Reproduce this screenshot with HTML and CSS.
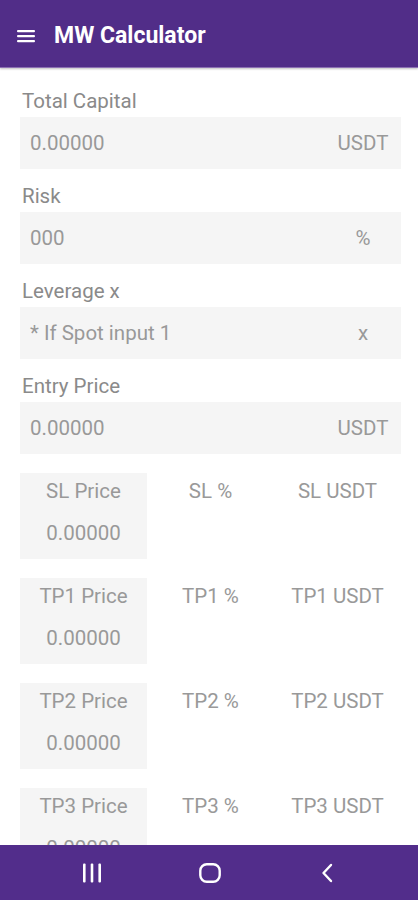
FILE: index.html
```html
<!DOCTYPE html>
<html lang="en">
<head>
    <meta charset="UTF-8">
    <meta name="viewport" content="width=device-width, initial-scale=1.0">
    <title>MW Calculator</title>
    <link rel="stylesheet" href="styles.css">
</head>
<body>
    <header class="app-bar">
        <svg class="menu-icon" width="20" height="20" viewBox="0 0 20 20">
            <rect x="1" y="4" width="18" height="2.2" rx="1" fill="#fff"/>
            <rect x="1" y="9" width="18" height="2.2" rx="1" fill="#fff"/>
            <rect x="1" y="14" width="18" height="2.2" rx="1" fill="#fff"/>
        </svg>
        <h1 class="app-title">MW Calculator</h1>
    </header>

    <main class="content">
        <div class="field">
            <div class="field-label">Total Capital</div>
            <div class="input-box">
                <span class="input-value">0.00000</span>
                <span class="input-unit">USDT</span>
            </div>
        </div>
        <div class="field">
            <div class="field-label">Risk</div>
            <div class="input-box">
                <span class="input-value">000</span>
                <span class="input-unit">%</span>
            </div>
        </div>
        <div class="field">
            <div class="field-label">Leverage x</div>
            <div class="input-box">
                <span class="input-value">* If Spot input 1</span>
                <span class="input-unit">x</span>
            </div>
        </div>
        <div class="field">
            <div class="field-label">Entry Price</div>
            <div class="input-box">
                <span class="input-value">0.00000</span>
                <span class="input-unit">USDT</span>
            </div>
        </div>

        <!-- SL / TP rows -->
        <div class="result-row">
            <div class="cell cell-input">
                <div class="cell-title">SL Price</div>
                <div class="cell-value">0.00000</div>
            </div>
            <div class="cell"><div class="cell-title">SL %</div></div>
            <div class="cell"><div class="cell-title">SL USDT</div></div>
        </div>
        <div class="result-row">
            <div class="cell cell-input">
                <div class="cell-title">TP1 Price</div>
                <div class="cell-value">0.00000</div>
            </div>
            <div class="cell"><div class="cell-title">TP1 %</div></div>
            <div class="cell"><div class="cell-title">TP1 USDT</div></div>
        </div>
        <div class="result-row">
            <div class="cell cell-input">
                <div class="cell-title">TP2 Price</div>
                <div class="cell-value">0.00000</div>
            </div>
            <div class="cell"><div class="cell-title">TP2 %</div></div>
            <div class="cell"><div class="cell-title">TP2 USDT</div></div>
        </div>
        <div class="result-row">
            <div class="cell cell-input">
                <div class="cell-title">TP3 Price</div>
                <div class="cell-value">0.00000</div>
            </div>
            <div class="cell"><div class="cell-title">TP3 %</div></div>
            <div class="cell"><div class="cell-title">TP3 USDT</div></div>
        </div>
    </main>

    <nav class="nav-bar">
        <svg width="24" height="22" viewBox="0 0 24 22">
            <rect x="3" y="1.5" width="2.6" height="19" rx="1" fill="#fff"/>
            <rect x="10.7" y="1.5" width="2.6" height="19" rx="1" fill="#fff"/>
            <rect x="18.4" y="1.5" width="2.6" height="19" rx="1" fill="#fff"/>
        </svg>
        <svg width="24" height="22" viewBox="0 0 24 22">
            <rect x="2.3" y="2.3" width="19.4" height="17.4" rx="6.5" fill="none" stroke="#fff" stroke-width="2.4"/>
        </svg>
        <svg width="24" height="22" viewBox="0 0 24 22">
            <path d="M16 3 L8.5 11 L16 19" fill="none" stroke="#fff" stroke-width="2.4" stroke-linecap="round" stroke-linejoin="round"/>
        </svg>
    </nav>
</body>
</html>
```

FILE: styles.css
```css
html, body {
    margin: 0;
    height: 100%;
}
body {
    font-family: Roboto, "Liberation Sans", sans-serif;
    background: #fff;
    display: flex;
    flex-direction: column;
    height: 900px;
    overflow: hidden;
}
.app-bar {
    height: 68px;
    flex-shrink: 0;
    box-sizing: border-box;
    background: #512d88;
    display: flex;
    align-items: center;
    padding: 4px 16px 0 16px;
    box-shadow: 0 1px 2px rgba(0, 0, 0, 0.25);
    border-bottom: 1px solid #8c70b3;
    position: relative;
    z-index: 1;
}
.menu-icon {
    margin-right: 18px;
}
.app-title {
    margin: 0;
    color: #fff;
    font-size: 23px;
    font-weight: bold;
}
.content {
    flex: 1;
    overflow: hidden;
    padding: 21px 17px 0 20px;
}
.field {
    margin-bottom: 15px;
}
.field-label {
    font-size: 20.5px;
    line-height: 24px;
    color: #8a8a8a;
    padding-left: 2px;
    margin-bottom: 4px;
}
.input-box {
    height: 52px;
    background: #f5f5f5;
    display: flex;
    align-items: center;
    padding: 0 12px 0 10px;
    font-size: 20.5px;
    color: #999;
}
.input-value {
    flex: 1;
}
.input-unit {
    width: 52px;
    text-align: center;
}
.result-row {
    display: grid;
    grid-template-columns: 1fr 1fr 1fr;
    margin-top: 19px;
    margin-bottom: 19px;
}
.cell {
    height: 86px;
    padding-top: 6px;
    box-sizing: border-box;
    text-align: center;
    font-size: 20.5px;
    line-height: 24px;
    color: #999;
}
.cell-input {
    background: #f5f5f5;
}
.cell-value {
    margin-top: 18px;
}
.nav-bar {
    height: 55px;
    flex-shrink: 0;
    background: #522d8b;
    display: flex;
    align-items: center;
    justify-content: space-between;
    padding: 0 79px 0 80px;
}
.nav-bar svg {
    display: block;
}
```
